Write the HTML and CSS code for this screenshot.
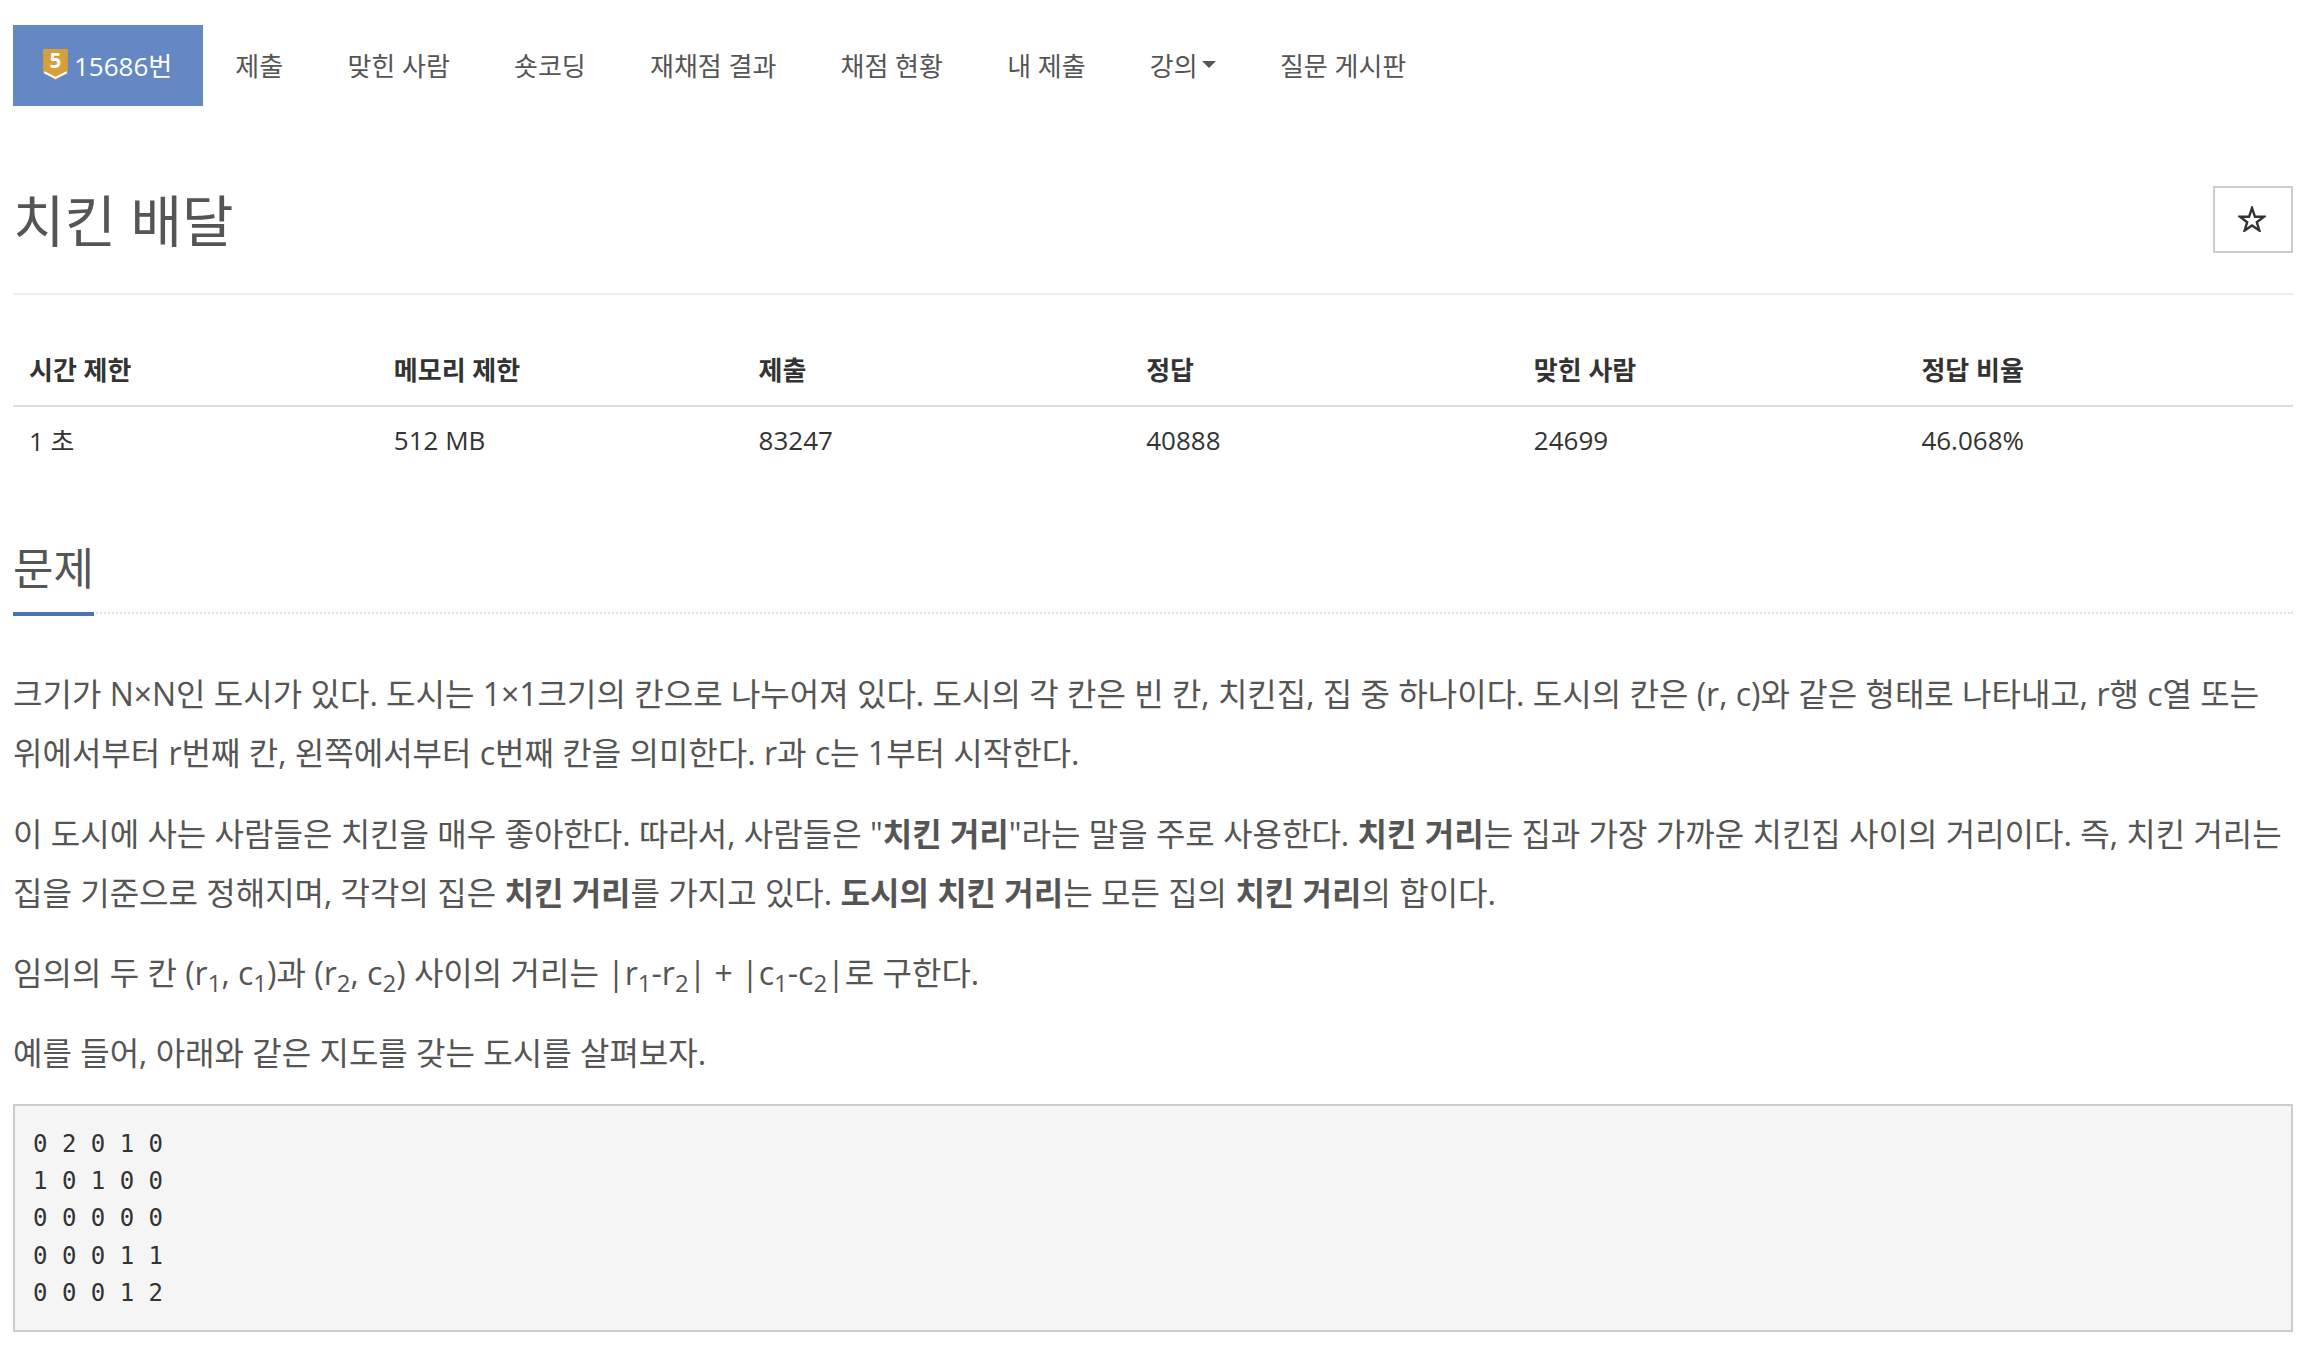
FILE: index.html

```html
<!DOCTYPE html>
<html lang="ko">
<head>
  <meta charset="utf-8">
  <title>치킨 배달</title>
  <link rel="stylesheet" href="styles.css">
</head>
<body>
  <ul class="tabs">
    <li class="active"><a href="#"><svg class="tier" viewBox="0 0 24 30"><path d="M0 0H24V22L12 30L0 22Z" fill="#d79f38"/><path d="M1 22.5L12 28L23 22.5" fill="none" stroke="#fff" stroke-width="2"/><text x="12" y="18" text-anchor="middle">5</text></svg>15686번</a></li>
    <li><a href="#">제출</a></li>
    <li><a href="#">맞힌 사람</a></li>
    <li><a href="#">숏코딩</a></li>
    <li><a href="#">재채점 결과</a></li>
    <li><a href="#">채점 현황</a></li>
    <li><a href="#">내 제출</a></li>
    <li><a href="#">강의<span class="caret"></span></a></li>
    <li><a href="#">질문 게시판</a></li>
  </ul>

  <div class="page-header">
    <h1>치킨 배달</h1>
    <button class="star-btn"><svg viewBox="0 0 28 26"><path d="M14 2L17 10.8H26L18.8 16.2L21.4 24.6L14 19.5L6.6 24.6L9.2 16.2L2 10.8H11Z" fill="#fff" stroke="#333" stroke-width="2.4"/></svg></button>
  </div>

  <table class="info">
    <thead>
      <tr><th>시간 제한</th><th>메모리 제한</th><th>제출</th><th>정답</th><th>맞힌 사람</th><th>정답 비율</th></tr>
    </thead>
    <tbody>
      <tr><td>1 초</td><td>512 MB</td><td>83247</td><td>40888</td><td>24699</td><td>46.068%</td></tr>
    </tbody>
  </table>

  <div class="headline"><h2>문제</h2></div>

  <div class="problem">
    <p>크기가 N×N인 도시가 있다. 도시는 1×1크기의 칸으로 나누어져 있다. 도시의 각 칸은 빈 칸, 치킨집, 집 중 하나이다. 도시의 칸은 (r, c)와 같은 형태로 나타내고, r행 c열 또는 위에서부터 r번째 칸, 왼쪽에서부터 c번째 칸을 의미한다. r과 c는 1부터 시작한다.</p>
    <p>이 도시에 사는 사람들은 치킨을 매우 좋아한다. 따라서, 사람들은 "<b>치킨 거리</b>"라는 말을 주로 사용한다. <b>치킨 거리</b>는 집과 가장 가까운 치킨집 사이의 거리이다. 즉, 치킨 거리는 집을 기준으로 정해지며, 각각의 집은 <b>치킨 거리</b>를 가지고 있다. <b>도시의 치킨 거리</b>는 모든 집의 <b>치킨 거리</b>의 합이다.</p>
    <p>임의의 두 칸 (r<sub>1</sub>, c<sub>1</sub>)과 (r<sub>2</sub>, c<sub>2</sub>) 사이의 거리는 |r<sub>1</sub>-r<sub>2</sub>| + |c<sub>1</sub>-c<sub>2</sub>|로 구한다.</p>
    <p>예를 들어, 아래와 같은 지도를 갖는 도시를 살펴보자.</p>
    <pre>0 2 0 1 0
1 0 1 0 0
0 0 0 0 0
0 0 0 1 1
0 0 0 1 2</pre>
  </div>
</body>
</html>
```

FILE: styles.css

```css
html, body {margin: 0; padding: 0; background: #fff;}
body {padding: 25px 26px 0 13px; font-family: "Open Sans", "Noto Sans CJK KR", sans-serif; color: #333; font-size: 26px; overflow: hidden;}
a {color: inherit; text-decoration: none;}

.tabs {display: flex; list-style: none; margin: 0; padding: 0; height: 81px;}
.tabs a {display: flex; align-items: center; height: 100%; padding: 0 32.1px 2px; box-sizing: border-box; color: #555;}
.tabs li {height: 100%;}
.tabs .active a {background: #6388c4; color: #fff; padding: 0 31px 2px 30px;}
.tier {width: 25px; height: 31px; margin-right: 6px; overflow: visible;}
.tier text {font: bold 20px "Open Sans", sans-serif; fill: #fff;}
.caret {display: inline-block; margin-left: 4px; border-top: 7px solid #555; border-left: 7px solid transparent; border-right: 7px solid transparent;}

.page-header {display: flex; justify-content: space-between; align-items: center; margin-top: 80px; padding-bottom: 40px; border-bottom: 2px solid #eee;}
.page-header h1 {margin: 2px 0 0; font-size: 56px; font-weight: 400; line-height: 65px; color: #555;}
.star-btn {width: 80px; height: 67px; padding: 0 2px 2px 0; background: #fff; border: 2px solid #ccc; display: flex; align-items: center; justify-content: center;}
.star-btn svg {width: 28px; height: 26px;}

.info {width: 100%; border-collapse: collapse; table-layout: fixed; margin-top: 45px;}
.info th, .info td {box-sizing: border-box; padding: 0 16px; width: 17%;}
.info th:nth-child(-n+2), .info td:nth-child(-n+2) {width: 16%;}
.info th {text-align: left; height: 66px; padding-bottom: 8px; border-bottom: 2px solid #ddd; font-weight: 700;}
.info td {height: 70px; padding-bottom: 4px;}

.headline {margin-top: 66px; border-bottom: 2px dotted #e0e0e0; height: 70px;}
.headline h2 {display: inline-block; margin: 0; height: 70px; font-size: 44px; font-weight: 400; line-height: 53px; color: #555; border-bottom: 4px solid #4a72b5; width: 81px; white-space: nowrap;}

.problem {margin-top: 50px; font-size: 32px; line-height: 59.3px; color: #555;}
.problem p {margin: 0 0 21px;}
.problem sub {font-size: 75%; line-height: 0;}
.problem pre {margin: 0; padding: 20px 18px; height: 228px; box-sizing: border-box; background: #f5f5f5; border: 2px solid #ccc; font-family: "DejaVu Sans Mono", monospace; font-size: 24px; line-height: 37.3px; color: #333;}
```
